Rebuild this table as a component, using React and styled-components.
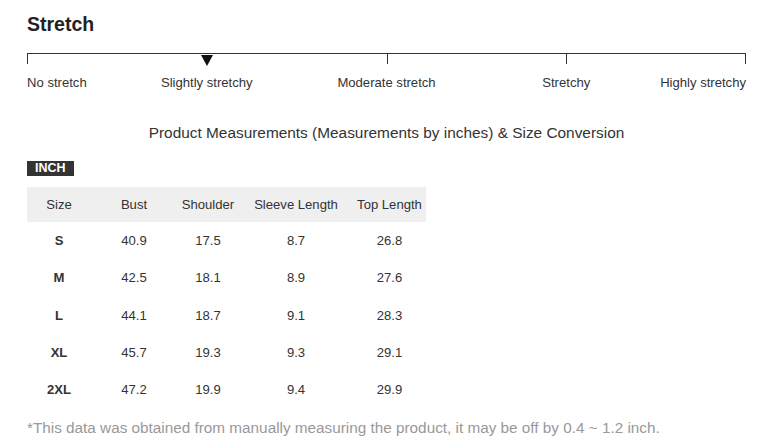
import React from "react";
import styled, { createGlobalStyle } from "styled-components";

const Global = createGlobalStyle`
  html, body { margin: 0; padding: 0; background: #fff; }
  body { font-family: "Liberation Sans", Arial, sans-serif; color: #333; }
`;

const Page = styled.div`
  width: 768px;
  height: 448px;
  box-sizing: border-box;
  padding: 12px 22px 0 27px;
  overflow: hidden;
`;

const Title = styled.h2`
  margin: 0;
  font-size: 19.5px;
  line-height: 24px;
  font-weight: 700;
  color: #222;
`;

const Scale = styled.div`
  position: relative;
  margin-top: 17px;
  height: 12px;
  border-top: 1px solid #333;
`;

const Tick = styled.span`
  position: absolute;
  top: 0;
  width: 1px;
  height: 10px;
  background: #333;
`;

const Marker = styled.span`
  position: absolute;
  top: 1px;
  width: 0;
  height: 0;
  border-left: 6px solid transparent;
  border-right: 6px solid transparent;
  border-top: 11px solid #111;
  transform: translateX(-6px);
`;

const Labels = styled.div`
  display: flex;
  justify-content: space-between;
  margin-top: 9px;
  font-size: 13.1px;
  line-height: 16px;
  color: #333;
`;

const Label = styled.span`
  width: 0;
  display: flex;
  justify-content: ${(p) => p.$align};
  white-space: nowrap;
`;

const Heading = styled.div`
  margin-top: 33px;
  text-align: center;
  font-size: 15.4px;
  line-height: 18px;
  color: #333;
  padding-left: 0px;
`;

const Badge = styled.div`
  display: inline-block;
  margin-top: 19px;
  background: #333;
  color: #fff;
  font-weight: 700;
  font-size: 12.5px;
  line-height: 15px;
  padding: 0 8px;
`;

const Table = styled.div`
  margin-top: 11px;
  width: 399px;
`;

const Row = styled.div`
  display: grid;
  grid-template-columns: 64px 86px 62px 114px 73px;
  height: ${(p) => (p.$head ? "35px" : "37.3px")};
  background: ${(p) => (p.$head ? "#efefef" : "transparent")};
  align-items: center;
  font-size: 13.1px;
  color: #333;
`;

const Cell = styled.div`
  text-align: center;
  white-space: nowrap;
  font-weight: ${(p) => (p.$bold ? 700 : 400)};
`;

const Note = styled.div`
  margin-top: 11px;
  font-size: 15.3px;
  color: #999;
  white-space: nowrap;
`;

const positions = [0, 25, 50, 75, 100];
const labels = [
  ["No stretch", "flex-start"],
  ["Slightly stretchy", "center"],
  ["Moderate stretch", "center"],
  ["Stretchy", "center"],
  ["Highly stretchy", "flex-end"],
];

const head = ["Size", "Bust", "Shoulder", "Sleeve Length", "Top Length"];
const rows = [
  ["S", "40.9", "17.5", "8.7", "26.8"],
  ["M", "42.5", "18.1", "8.9", "27.6"],
  ["L", "44.1", "18.7", "9.1", "28.3"],
  ["XL", "45.7", "19.3", "9.3", "29.1"],
  ["2XL", "47.2", "19.9", "9.4", "29.9"],
];

export default function App() {
  return (
    <>
      <Global />
      <Page>
        <Title>Stretch</Title>
        <Scale>
          {positions.map((p, i) =>
            i === 1 ? (
              <Marker key={i} style={{ left: `${p}%` }} />
            ) : (
              <Tick key={i} style={{ left: i === 4 ? "calc(100% - 1px)" : `${p}%` }} />
            )
          )}
        </Scale>
        <Labels>
          {labels.map(([t, a]) => (
            <Label key={t} $align={a}>
              {t}
            </Label>
          ))}
        </Labels>
        <Heading>Product Measurements (Measurements by inches) &amp; Size Conversion</Heading>
        <Badge>INCH</Badge>
        <Table>
          <Row $head>
            {head.map((h) => (
              <Cell key={h}>{h}</Cell>
            ))}
          </Row>
          {rows.map((r) => (
            <Row key={r[0]}>
              {r.map((c, i) => (
                <Cell key={i} $bold={i === 0}>
                  {c}
                </Cell>
              ))}
            </Row>
          ))}
        </Table>
        <Note>*This data was obtained from manually measuring the product, it may be off by 0.4 ~ 1.2 inch.</Note>
      </Page>
    </>
  );
}
